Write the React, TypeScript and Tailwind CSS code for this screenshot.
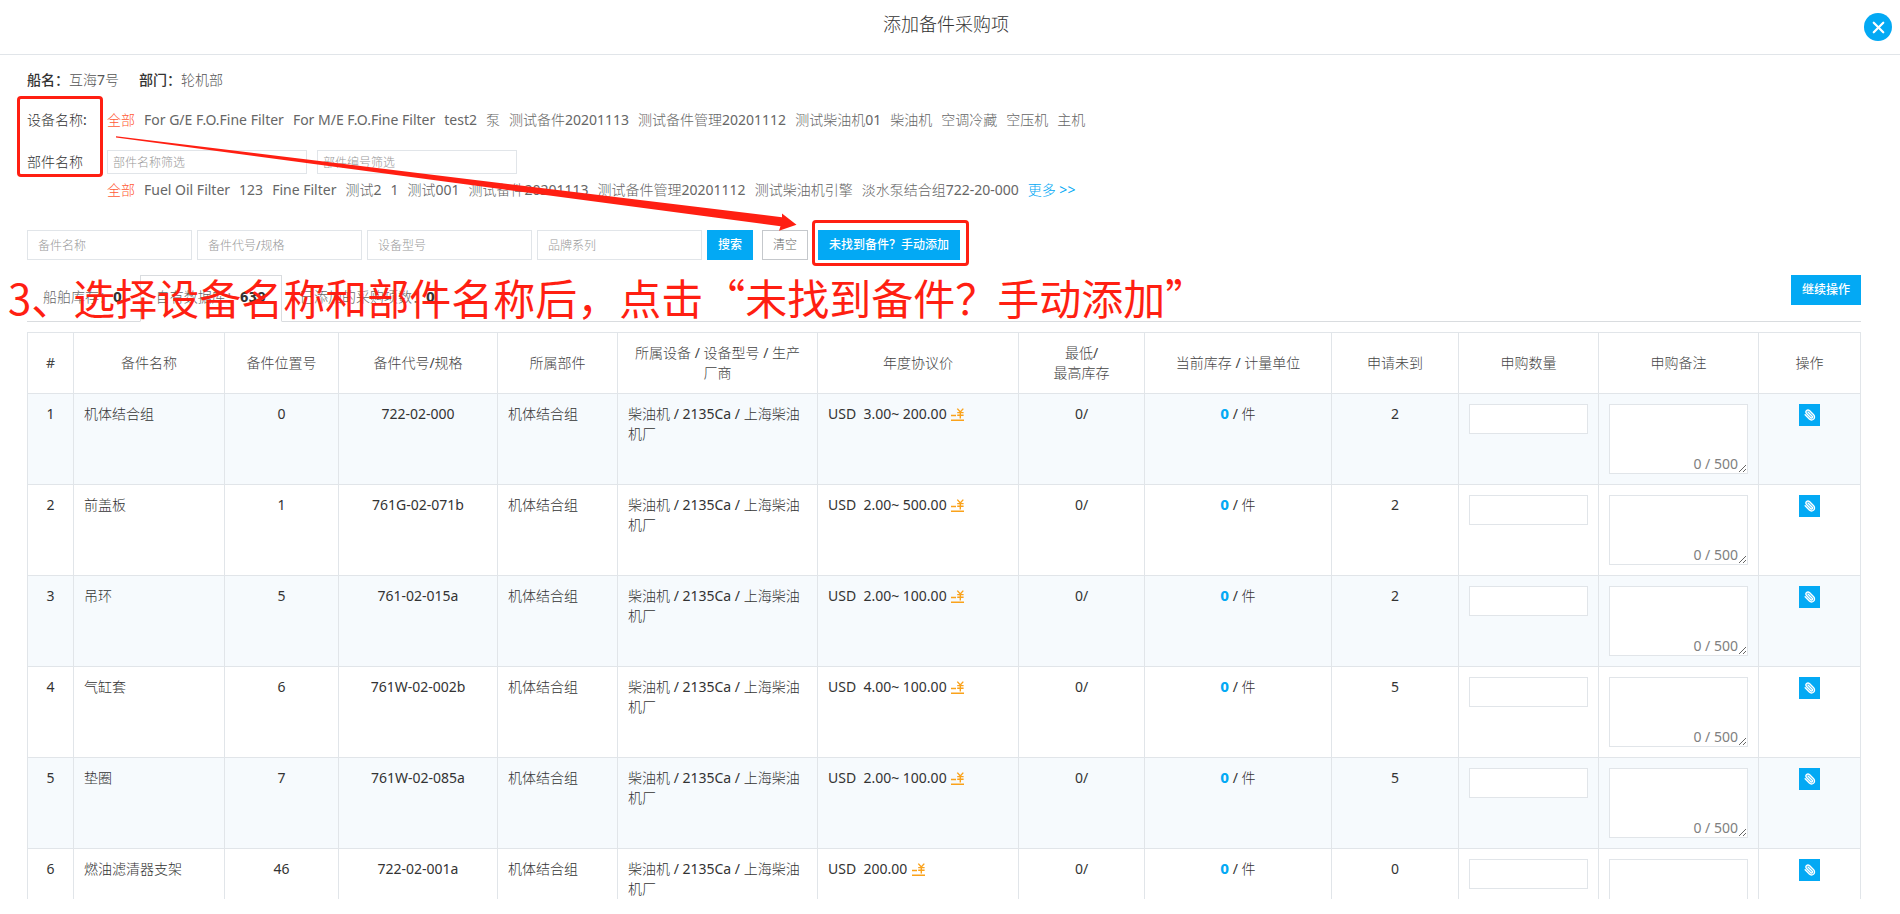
import { Paperclip, X } from "lucide-react";
import type { ReactNode } from "react";

const devices = [
  "For G/E F.O.Fine Filter",
  "For M/E F.O.Fine Filter",
  "test2",
  "泵",
  "测试备件20201113",
  "测试备件管理20201112",
  "测试柴油机01",
  "柴油机",
  "空调冷藏",
  "空压机",
  "主机",
];

const components = [
  "Fuel Oil Filter",
  "123",
  "Fine Filter",
  "测试2",
  "1",
  "测试001",
  "测试备件20201113",
  "测试备件管理20201112",
  "测试柴油机引擎",
  "淡水泵结合组722-20-000",
];

const searchFields = ["备件名称", "备件代号/规格", "设备型号", "品牌系列"];

const columns: { title: ReactNode; width: string }[] = [
  { title: "#", width: "w-[46px]" },
  { title: "备件名称", width: "w-[151px]" },
  { title: "备件位置号", width: "w-[114px]" },
  { title: "备件代号/规格", width: "w-[159px]" },
  { title: "所属部件", width: "w-[120px]" },
  { title: "所属设备 / 设备型号 / 生产厂商", width: "w-[200px]" },
  { title: "年度协议价", width: "w-[201px]" },
  {
    title: (
      <>
        最低/
        <br />
        最高库存
      </>
    ),
    width: "w-[126px]",
  },
  { title: "当前库存 / 计量单位", width: "w-[187px]" },
  { title: "申请未到", width: "w-[127px]" },
  { title: "申购数量", width: "w-[140px]" },
  { title: "申购备注", width: "w-[160px]" },
  { title: "操作", width: "w-[102px]" },
];

const rows = [
  { name: "机体结合组", position: "0", code: "722-02-000", price: "3.00~ 200.00", pending: 2 },
  { name: "前盖板", position: "1", code: "761G-02-071b", price: "2.00~ 500.00", pending: 2 },
  { name: "吊环", position: "5", code: "761-02-015a", price: "2.00~ 100.00", pending: 2 },
  { name: "气缸套", position: "6", code: "761W-02-002b", price: "4.00~ 100.00", pending: 5 },
  { name: "垫圈", position: "7", code: "761W-02-085a", price: "2.00~ 100.00", pending: 5 },
  { name: "燃油滤清器支架", position: "46", code: "722-02-001a", price: "200.00", pending: 0 },
];

const cell = "border border-[#e1e5e9] p-2.5";
const field = "border border-[#e1e5e9] bg-white outline-none";
const boldDigits = "font-['DejaVu_Sans_Condensed','Noto_Sans',sans-serif] font-bold";
const boldText = "font-['Noto_Sans','Noto_Sans_CJK_SC',sans-serif] font-medium";

function OptionList({ items, more }: { items: string[]; more?: boolean }) {
  return (
    <div className="flex flex-wrap gap-x-[9px] text-[#666]">
      <a href="#all" className="text-[#ff5a36]">
        全部
      </a>
      {items.map((item) => (
        <a key={item} href="#option">
          {item}
        </a>
      ))}
      {more && (
        <a href="#more" className="text-[#03a9f4]">
          更多 &gt;&gt;
        </a>
      )}
    </div>
  );
}

function PriceIcon() {
  return (
    <svg viewBox="0 0 13 13" className="inline-block size-[13px] align-[-2px]" fill="none" stroke="#faa21b" aria-hidden="true">
      <path d="M0 7.5h5M0 12.2h13" strokeWidth="1.4" />
      <path d="M6.3.6 9.3 4l3-3.4M9.3 4v6.4M6.2 4.6h6.4M6.2 7.2h6.4" strokeWidth="1.4" />
    </svg>
  );
}

function Annotations() {
  return (
    <div className="pointer-events-none absolute inset-0 text-[#ff1f12]">
      <div className="absolute top-24 left-[17px] h-[81px] w-[86px] rounded-[4px] border-3 border-current" />
      <div className="absolute top-[220px] left-[812px] h-[46px] w-[157px] rounded-[4px] border-3 border-current" />
      <svg className="absolute top-[130px] left-[110px] h-[110px] w-[700px]" viewBox="110 130 700 110" fill="currentColor">
        <path d="M116 136.3 782 217.3 782 213.5 796.5 224.8 779 230.8 780.5 226.3 116 137.6Z" />
      </svg>
      <p className="absolute top-[268px] left-2 font-['Noto_Sans_CJK_SC',sans-serif] text-[42px] leading-[58px] whitespace-nowrap">
        3、选择设备名称和部件名称后，点击“未找到备件？手动添加”
      </p>
    </div>
  );
}

export default function App() {
  return (
    <div
      lang="zh-CN"
      className="relative flex h-screen flex-col overflow-hidden bg-white pb-[15px] font-['Noto_Sans','Noto_Sans_CJK_SC_Light','Noto_Sans_CJK_SC',sans-serif] text-sm leading-5 text-[#333]"
    >
      <header className="flex h-[55px] shrink-0 items-center border-b border-[#e1e5e9] pr-2">
        <h1 className="flex-1 pb-1.5 pl-7 text-center text-lg">添加备件采购项</h1>
        <button type="button" aria-label="关闭" className="flex size-7 items-center justify-center rounded-full bg-[#03a9f4] text-white">
          <X className="size-[19px]" strokeWidth={2.8} />
        </button>
      </header>

      <main className="min-h-0 flex-1 overflow-hidden pt-[15px] pr-[39px] pl-[27px]">
        <div className="flex h-5 gap-5">
          <p>
            <b className={boldText}>船名：</b>
            <span className="text-[#555]">互海7号</span>
          </p>
          <p>
            <b className={boldText}>部门：</b>
            <span className="text-[#555]">轮机部</span>
          </p>
        </div>

        <div className="mt-5 flex">
          <span className="w-20 shrink-0">设备名称:</span>
          <OptionList items={devices} />
        </div>
        <div className="mt-5 flex">
          <span className="w-20 shrink-0 leading-6">部件名称</span>
          <div>
            <div className="mb-1.5 flex gap-2.5">
              {["部件名称筛选", "部件编号筛选"].map((label) => (
                <input key={label} aria-label={label} placeholder={label} className="h-6 w-[200px] border border-[#e1e5e9] px-[5px] text-xs outline-none placeholder:text-[#999]" />
              ))}
            </div>
            <OptionList items={components} more />
          </div>
        </div>

        <form className="mt-[30px] flex text-xs">
          <div className="flex gap-[5px]">
            {searchFields.map((label) => (
              <input key={label} aria-label={label} placeholder={label} className="h-[30px] w-[165px] border border-[#e1e5e9] px-2.5 outline-none placeholder:text-[#999]" />
            ))}
          </div>
          <button type="button" className={`${boldText} ml-[5px] h-[30px] w-[46px] bg-[#03a9f4] text-white`}>
            搜索
          </button>
          <button type="button" className="ml-[9px] h-[30px] w-[46px] border border-[#c5c8cc] text-[#666]">
            清空
          </button>
          <button type="button" className={`${boldText} ml-2.5 h-[30px] w-[142px] bg-[#03a9f4] text-white`}>
            未找到备件？手动添加
          </button>
        </form>

        <div className="mt-[15px] flex items-start justify-between border-b border-[#d9dcdf]">
          <div className="-mb-px flex gap-0.5 text-[#666]">
            <button type="button" className="h-[47px] border border-transparent px-[15px] pb-1">
              船舶库存：<b className={`${boldDigits} text-[#333]`}>0</b>
            </button>
            <button type="button" className="h-[47px] border border-[#d9dcdf] border-b-white px-[15px] pb-1">
              自有数据库：<b className={`${boldDigits} text-[#333]`}>639</b>
            </button>
            <button type="button" className="h-[47px] border border-transparent px-[15px] pb-1">
              已添加的采购项数：<b className={`${boldDigits} text-[#333]`}>0</b>
            </button>
          </div>
          <button type="button" className={`${boldText} h-[30px] w-[70px] bg-[#03a9f4] text-xs text-white`}>
            继续操作
          </button>
        </div>

        <table className="mt-2.5 w-full table-fixed border-collapse">
          <thead>
            <tr className="h-[61px]">
              {columns.map((column, index) => (
                <th key={index} scope="col" className={`${cell} ${column.width} px-3 py-0 text-center font-normal text-[#444]`}>
                  {column.title}
                </th>
              ))}
            </tr>
          </thead>
          <tbody>
            {rows.map((row, index) => (
              <tr key={row.code} className="h-[91px] text-center align-top odd:bg-[#f6fafd]">
                <td className={cell}>{index + 1}</td>
                <td className={`${cell} text-left`}>{row.name}</td>
                <td className={cell}>{row.position}</td>
                <td className={cell}>{row.code}</td>
                <td className={`${cell} text-left`}>机体结合组</td>
                <td className={`${cell} text-left`}>柴油机 / 2135Ca / 上海柴油机厂</td>
                <td className={`${cell} text-left`}>
                  USD&nbsp; {row.price}{" "}
                  <a href="#price" aria-label="协议价" className="ml-px">
                    <PriceIcon />
                  </a>
                </td>
                <td className={cell}>0/</td>
                <td className={cell}>
                  <b className={`${boldDigits} text-[#03a9f4]`}>0</b> / 件
                </td>
                <td className={cell}>{row.pending}</td>
                <td className={cell}>
                  <input aria-label={`${row.name}申购数量`} className={`${field} block h-[30px] w-full px-2.5`} />
                </td>
                <td className={cell}>
                  <div className="relative">
                    <textarea aria-label={`${row.name}申购备注`} className={`${field} block h-[70px] w-full px-2.5`} />
                    <span className="pointer-events-none absolute right-2.5 bottom-0 text-[#808080]">0 / 500</span>
                  </div>
                </td>
                <td className={cell}>
                  <button type="button" aria-label="附件" className="mx-auto flex h-[22px] w-[21px] items-center justify-center bg-[#03a9f4] text-white">
                    <Paperclip className="size-3 -scale-x-100" strokeWidth={2.8} />
                  </button>
                </td>
              </tr>
            ))}
          </tbody>
        </table>
      </main>

      <Annotations />
    </div>
  );
}
